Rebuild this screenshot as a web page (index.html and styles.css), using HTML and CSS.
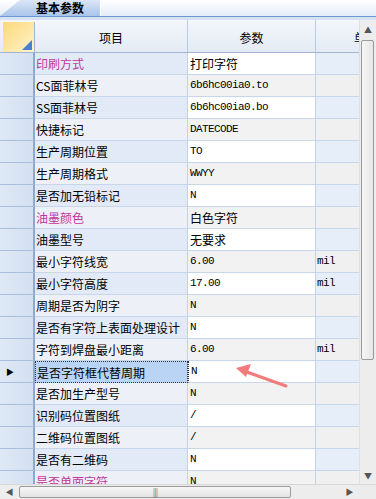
FILE: index.html
```html
<!DOCTYPE html>
<html lang="zh-CN">
<head>
    <meta charset="UTF-8">
    <title>基本参数</title>
    <link rel="stylesheet" href="styles.css">
</head>
<body>
    <div class="tabbar">
        <div class="tab">基本参数</div>
    </div>
    <div class="tabline"></div>

    <div class="panel">
        <div class="sheet">
            <div class="row head">
                <div class="corner"></div>
                <div class="hcell">项目</div>
                <div class="hcell">参数</div>
                <div class="hcell unit">单位</div>
            </div>
            <div class="rows">
                <div class="row"><div class="ind"></div><div class="item pink">印刷方式</div><div class="val cn">打印字符</div><div class="unit-cell"></div></div>
                <div class="row"><div class="ind"></div><div class="item">CS面菲林号</div><div class="val">6b6hc00ia0.to</div><div class="unit-cell"></div></div>
                <div class="row"><div class="ind"></div><div class="item">SS面菲林号</div><div class="val">6b6hc00ia0.bo</div><div class="unit-cell"></div></div>
                <div class="row"><div class="ind"></div><div class="item">快捷标记</div><div class="val">DATECODE</div><div class="unit-cell"></div></div>
                <div class="row"><div class="ind"></div><div class="item">生产周期位置</div><div class="val">TO</div><div class="unit-cell"></div></div>
                <div class="row"><div class="ind"></div><div class="item">生产周期格式</div><div class="val">WWYY</div><div class="unit-cell"></div></div>
                <div class="row"><div class="ind"></div><div class="item">是否加无铅标记</div><div class="val">N</div><div class="unit-cell"></div></div>
                <div class="row"><div class="ind"></div><div class="item pink">油墨颜色</div><div class="val cn">白色字符</div><div class="unit-cell"></div></div>
                <div class="row"><div class="ind"></div><div class="item">油墨型号</div><div class="val cn">无要求</div><div class="unit-cell"></div></div>
                <div class="row"><div class="ind"></div><div class="item">最小字符线宽</div><div class="val">6.00</div><div class="unit-cell">mil</div></div>
                <div class="row"><div class="ind"></div><div class="item">最小字符高度</div><div class="val">17.00</div><div class="unit-cell">mil</div></div>
                <div class="row"><div class="ind"></div><div class="item">周期是否为阴字</div><div class="val">N</div><div class="unit-cell"></div></div>
                <div class="row"><div class="ind"></div><div class="item">是否有字符上表面处理设计</div><div class="val">N</div><div class="unit-cell"></div></div>
                <div class="row"><div class="ind"></div><div class="item">字符到焊盘最小距离</div><div class="val">6.00</div><div class="unit-cell">mil</div></div>
                <div class="row current"><div class="ind">&#9654;</div><div class="item">是否字符框代替周期</div><div class="val">N</div><div class="unit-cell"></div></div>
                <div class="row"><div class="ind"></div><div class="item">是否加生产型号</div><div class="val">N</div><div class="unit-cell"></div></div>
                <div class="row"><div class="ind"></div><div class="item">识别码位置图纸</div><div class="val">/</div><div class="unit-cell"></div></div>
                <div class="row"><div class="ind"></div><div class="item">二维码位置图纸</div><div class="val">/</div><div class="unit-cell"></div></div>
                <div class="row"><div class="ind"></div><div class="item">是否有二维码</div><div class="val">N</div><div class="unit-cell"></div></div>
                <div class="row"><div class="ind"></div><div class="item pink">是否单面字符</div><div class="val">N</div><div class="unit-cell"></div></div>
            </div>
        </div>

        <div class="vscroll">
            <div class="arrow">&#9650;</div>
            <div class="vthumb"></div>
            <div class="vtrack"></div>
            <div class="arrow">&#9660;</div>
        </div>
    </div>

    <div class="hscroll">
        <div class="harrow">&#9664;</div>
        <div class="hthumb">|||</div>
        <div class="htrack"></div>
        <div class="harrow">&#9654;</div>
        <div class="sizebox"></div>
    </div>

    <!-- red annotation arrow drawn over the grid -->
    <svg class="mark" width="376" height="499" viewBox="0 0 376 499">
        <line x1="286" y1="386" x2="244" y2="371" stroke="#f27b7b" stroke-width="3" stroke-linecap="round"/>
        <polygon points="236,368 251,364 246,377" fill="#f27b7b"/>
    </svg>
</body>
</html>
```

FILE: styles.css
```css
* {
    margin: 0;
    padding: 0;
    box-sizing: border-box;
}

body {
    width: 376px;
    height: 499px;
    overflow: hidden;
    position: relative;
    background: #dbe6f4;
    font-family: "Noto Sans CJK SC", "Liberation Sans", sans-serif;
    font-size: 12px;
    color: #000;
}

/* Tab strip */
.tabbar {
    height: 16px;
    background: linear-gradient(#ffffff, #e3ecf8);
    display: flex;
}

.tab {
    width: 101px;
    height: 16px;
    padding-left: 36px;
    display: flex;
    align-items: center;
    font-weight: bold;
    font-size: 12px;
    line-height: 14px;
    background: linear-gradient(#dbe7f8, #a9c4ea);
    border-right: 1px solid #ffffff;
    clip-path: polygon(0 100%, 20px 0, 100% 0, 100% 100%);
}

.tabline {
    height: 4px;
    background: #d6e3f4;
    border-top: 1px solid #6f98d0;
}

/* Grid area */
.panel {
    display: flex;
    height: 464px;
}

.sheet {
    width: 359px;
    display: flex;
    flex-direction: column;
    overflow: hidden;
}

.row {
    display: grid;
    grid-template-columns: 35px 153px 128px 43px;
    height: 22px;
    flex-shrink: 0;
}

.row.head {
    height: 33px;
    background: linear-gradient(#f4f7fb, #e4ebf5);
    border-bottom: 1px solid #9fb6d6;
}

.corner {
    position: relative;
    margin: 2px 0 0 3px;
    background: linear-gradient(135deg, #fcd979, #fff3cc);
    border-right: 1px solid #9fb6d6;
}

.corner::after {
    content: "";
    position: absolute;
    right: 2px;
    bottom: 2px;
    border-left: 10px solid transparent;
    border-bottom: 10px solid #4a7fd0;
}

.hcell {
    display: flex;
    align-items: center;
    justify-content: center;
    border-right: 1px solid #b9cbe3;
    padding-top: 2px;
}

.hcell.unit {
    justify-content: flex-start;
    padding-left: 38px;
    overflow: hidden;
    white-space: nowrap;
    border-right: none;
}

.rows {
    flex: 1;
    overflow: hidden;
    display: flex;
    flex-direction: column;
}

.rows .row > div {
    border-bottom: 1px solid #c7d6ea;
    line-height: 21px;
    white-space: nowrap;
    overflow: hidden;
}

.ind {
    background: linear-gradient(90deg, #dfe8f5, #d3e0f1);
    border-right: 2px solid #8ea9d0;
    border-bottom-color: #a9bfdc !important;
    font-size: 8px;
    padding-left: 6px;
}

.item {
    padding-left: 1px;
    background: #e2eaf7;
    border-right: 1px solid #c2d2e8;
}

.val {
    padding-left: 2px;
    background: #ffffff;
    border-right: 1px solid #c2d2e8;
    font-family: "Liberation Mono", monospace;
    font-size: 11px;
    letter-spacing: -0.6px;
}

.val.cn {
    font-family: "Noto Sans CJK SC", sans-serif;
    font-size: 12px;
    letter-spacing: 0;
}

.unit-cell {
    padding-left: 1px;
    background: #e6eefa;
    font-family: "Liberation Mono", monospace;
    font-size: 11px;
    letter-spacing: -0.6px;
}

.rows .row:nth-child(even) .item { background: #edf1f7; }
.rows .row:nth-child(even) .val { background: #f2f2f2; }
.rows .row:nth-child(even) .unit-cell { background: #f0f0f0; }

.pink {
    color: #c0369c;
}

.row.current .item {
    background: #b9d4f4;
    border: 1px dotted #333;
}

.row.current .val {
    background: #ffffff;
    border-left: 1px dotted #333;
}

/* Scroll bars */
.vscroll {
    width: 17px;
    display: flex;
    flex-direction: column;
    background: #ededed;
    border-left: 1px solid #e0e0e0;
    padding-top: 2px;
}

.arrow {
    height: 16px;
    font-size: 8px;
    color: #555;
    text-align: center;
    line-height: 16px;
}

.vthumb {
    height: 320px;
    margin: 2px 2px 0 1px;
    border: 1px solid #9a9a9a;
    border-radius: 2px;
    background: linear-gradient(90deg, #f6f6f6, #e6e6e6);
}

.vtrack {
    flex: 1;
}

.hscroll {
    height: 15px;
    display: flex;
    background: #ededed;
    border-top: 1px solid #d8d8d8;
}

.harrow {
    width: 19px;
    font-size: 8px;
    color: #555;
    text-align: center;
    line-height: 14px;
}

.hthumb {
    width: 272px;
    margin: 1px 0;
    border: 1px solid #9a9a9a;
    border-radius: 2px;
    background: linear-gradient(#f7f7f7, #e3e3e3);
    font-size: 9px;
    color: #777;
    text-align: center;
    line-height: 11px;
    letter-spacing: -1px;
}

.htrack {
    flex: 1;
}

.sizebox {
    width: 17px;
    background: #ececec;
}

.mark {
    position: absolute;
    left: 0;
    top: 0;
    pointer-events: none;
}
```
